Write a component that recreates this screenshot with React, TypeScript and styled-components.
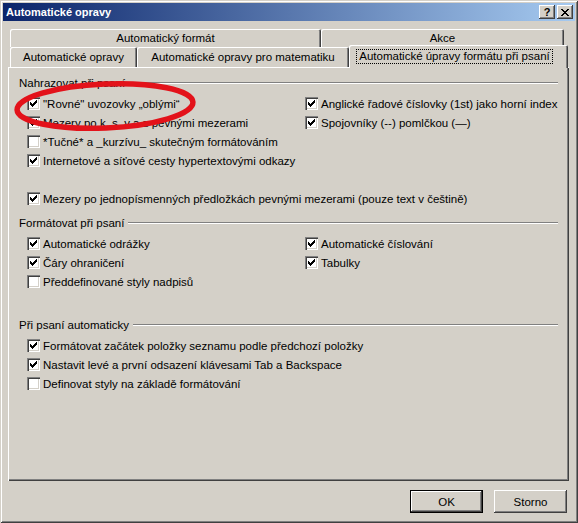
import React from "react";
import styled, { createGlobalStyle } from "styled-components";

const FACE = "#d4d0c8";
const SHADOW = "#808080";
const DARK = "#404040";

const GlobalStyle = createGlobalStyle`
  html, body {
    margin: 0;
    padding: 0;
    background: ${FACE};
  }
  body {
    font-family: "Liberation Sans", Arial, sans-serif;
    font-size: 11.5px;
    color: #000;
  }
`;

// Dialog frame
const Window = styled.div`
  position: relative;
  width: 578px;
  height: 523px;
  box-sizing: border-box;
  padding: 3px;
  background: ${FACE};
  display: flex;
  flex-direction: column;
  box-shadow: inset 1px 1px 0 ${FACE}, inset -1px -1px 0 ${DARK},
    inset 2px 2px 0 #fff, inset -2px -2px 0 ${SHADOW};
`;

const TitleBar = styled.div`
  height: 18px;
  display: flex;
  align-items: center;
  justify-content: space-between;
  padding: 0 2px 0 2px;
  background: linear-gradient(to right, #0a246a, #a6caf0);
`;

const TitleText = styled.span`
  color: #fff;
  font-weight: bold;
  font-size: 11px;
  padding-left: 1px;
`;

const CaptionButtons = styled.div`
  display: flex;
  gap: 2px;
`;

const CaptionButton = styled.div`
  width: 16px;
  height: 14px;
  box-sizing: border-box;
  background: ${FACE};
  display: flex;
  align-items: center;
  justify-content: center;
  font-weight: bold;
  font-size: 11px;
  box-shadow: inset -1px -1px 0 ${DARK}, inset 1px 1px 0 #fff,
    inset -2px -2px 0 ${SHADOW}, inset 2px 2px 0 ${FACE};
`;

// Tabs
const TabStrip = styled.div`
  margin: 8px 6px 0 5px;
  display: flex;
  flex-direction: column;
`;

const TabRow = styled.div<{ $height: number }>`
  display: flex;
  height: ${(p) => p.$height}px;
  padding-left: 2px;
  align-items: flex-end;
`;

const Tab = styled.div<{ $active?: boolean; $width: number }>`
  position: relative;
  flex: none;
  width: ${(p) => p.$width}px;
  box-sizing: border-box;
  height: ${(p) => (p.$active ? "calc(100% + 3px)" : "100%")};
  margin: ${(p) => (p.$active ? "0 0 -1px 0" : "0")};
  z-index: ${(p) => (p.$active ? 1 : 0)};
  background: ${FACE};
  border-top-left-radius: 2px;
  border-top-right-radius: 2px;
  display: flex;
  align-items: center;
  justify-content: center;
  padding: 0 ${(p) => (p.$active ? "8px 1px 0" : "0")};
  white-space: nowrap;
  box-shadow: inset 1px 1px 0 #fff, inset -1px 0 0 ${DARK},
    inset -2px 0 0 ${SHADOW};
`;

const FocusLabel = styled.span`
  outline: 1px dotted #000;
  outline-offset: 0;
  padding: 0 2px;
  line-height: 13px;
`;

const Panel = styled.div`
  margin: 0 6px 0 5px;
  height: 414px;
  box-sizing: border-box;
  padding: 8px 11px 0 11px;
  display: flex;
  flex-direction: column;
  box-shadow: inset 1px 1px 0 #fff, inset -1px -1px 0 ${DARK},
    inset -2px -2px 0 ${SHADOW};
`;

// Groups of options
const Group = styled.div<{ $gap: number }>`
  margin-top: ${(p) => p.$gap}px;
`;

const GroupTitle = styled.div`
  display: flex;
  align-items: center;
  gap: 4px;
  height: 16px;
  margin-bottom: 3px;
  white-space: nowrap;

  &::after {
    content: "";
    flex: 1;
    height: 0;
    border-top: 1px solid ${SHADOW};
    border-bottom: 1px solid #fff;
  }
`;

const OptionGrid = styled.div`
  display: grid;
  grid-template-columns: 278px 1fr;
  grid-auto-rows: 19px;
  padding-left: 8px;
`;

const Option = styled.label<{ $wide?: boolean }>`
  display: flex;
  align-items: center;
  gap: 3px;
  white-space: nowrap;
  grid-column: ${(p) => (p.$wide ? "1 / -1" : "auto")};
`;

const Spacer = styled.span<{ $wide?: boolean }>`
  grid-column: ${(p) => (p.$wide ? "1 / -1" : "auto")};
`;

const Box = styled.span`
  width: 13px;
  height: 13px;
  flex: none;
  box-sizing: border-box;
  background: #fff;
  position: relative;
  box-shadow: inset 1px 1px 0 ${SHADOW}, inset 2px 2px 0 ${DARK},
    inset -1px -1px 0 #fff, inset -2px -2px 0 ${FACE};

  svg {
    position: absolute;
    left: 3px;
    top: 3px;
  }
`;

// Bottom buttons
const Footer = styled.div`
  display: flex;
  justify-content: flex-end;
  gap: 11px;
  padding: 9px 8px 0 0;
`;

const Button = styled.div<{ $default?: boolean }>`
  width: 73px;
  height: 23px;
  box-sizing: border-box;
  display: flex;
  align-items: center;
  justify-content: center;
  background: ${FACE};
  box-shadow: ${(p) =>
    p.$default
      ? `inset 0 0 0 1px #000, inset -2px -2px 0 ${DARK}, inset 2px 2px 0 #fff, inset -3px -3px 0 ${SHADOW}`
      : `inset -1px -1px 0 ${DARK}, inset 1px 1px 0 #fff, inset -2px -2px 0 ${SHADOW}`};
`;

const Annotation = styled.svg`
  position: absolute;
  left: 12px;
  top: 78px;
  pointer-events: none;
`;

const CheckMark = () => (
  <svg width="7" height="7" viewBox="0 0 7 7" shapeRendering="crispEdges">
    <path
      fill="#000"
      d="M6 0h1v1h-1z M5 1h2v1h-2z M0 2h1v1h-1z M4 2h3v1h-3z M0 3h2v1h-2z M3 3h3v1h-3z M0 4h5v1h-5z M1 5h3v1h-3z M2 6h1v1h-1z"
    />
  </svg>
);

const CloseGlyph = () => (
  <svg width="8" height="7" viewBox="0 0 8 7" shapeRendering="crispEdges">
    <path
      fill="#000"
      d="M0 0h2v1h-2z M6 0h2v1h-2z M1 1h2v1h-2z M5 1h2v1h-2z M2 2h4v1h-4z M3 3h2v1h-2z M2 4h4v1h-4z M1 5h2v1h-2z M5 5h2v1h-2z M0 6h2v1h-2z M6 6h2v1h-2z"
    />
  </svg>
);

interface OptionItem {
  label: string;
  checked: boolean;
  wide?: boolean;
  blank?: boolean;
}

const CheckOption = ({ label, checked, wide }: OptionItem) => (
  <Option $wide={wide}>
    <Box>{checked && <CheckMark />}</Box>
    {label}
  </Option>
);

const replaceOptions: OptionItem[] = [
  { label: "\"Rovné\" uvozovky \u201eoblými\u201c", checked: true },
  { label: "Anglické řadové číslovky (1st) jako horní index", checked: true },
  { label: "Mezery po k, s, v a z pevnými mezerami", checked: true },
  { label: "Spojovníky (--) pomlčkou (—)", checked: true },
  { label: "*Tučné* a _kurzívu_ skutečným formátováním", checked: false },
  { label: "", checked: false, blank: true },
  { label: "Internetové a síťové cesty hypertextovými odkazy", checked: true, wide: true },
  { label: "", checked: false, blank: true, wide: true },
  {
    label: "Mezery po jednopísmenných předložkách pevnými mezerami (pouze text v češtině)",
    checked: true,
    wide: true,
  },
];

const formatOptions: OptionItem[] = [
  { label: "Automatické odrážky", checked: true },
  { label: "Automatické číslování", checked: true },
  { label: "Čáry ohraničení", checked: true },
  { label: "Tabulky", checked: true },
  { label: "Předdefinované styly nadpisů", checked: false },
];

const autoOptions: OptionItem[] = [
  { label: "Formátovat začátek položky seznamu podle předchozí položky", checked: true, wide: true },
  { label: "Nastavit levé a první odsazení klávesami Tab a Backspace", checked: true, wide: true },
  { label: "Definovat styly na základě formátování", checked: false, wide: true },
];

const renderOptions = (items: OptionItem[]) =>
  items.map((item, i) =>
    item.blank ? <Spacer key={i} $wide={item.wide} /> : <CheckOption key={i} {...item} />
  );

export default function App() {
  return (
    <>
      <GlobalStyle />
      <Window>
        <TitleBar>
          <TitleText>Automatické opravy</TitleText>
          <CaptionButtons>
            <CaptionButton>?</CaptionButton>
            <CaptionButton>
              <CloseGlyph />
            </CaptionButton>
          </CaptionButtons>
        </TitleBar>

        <TabStrip>
          <TabRow $height={18}>
            <Tab $width={311}>Automatický formát</Tab>
            <Tab $width={243}>Akce</Tab>
          </TabRow>
          <TabRow $height={20}>
            <Tab $width={127}>Automatické opravy</Tab>
            <Tab $width={212}>Automatické opravy pro matematiku</Tab>
            <Tab $width={219} $active>
              <FocusLabel>Automatické úpravy formátu při psaní</FocusLabel>
            </Tab>
          </TabRow>
        </TabStrip>

        <Panel>
          <Group $gap={0}>
            <GroupTitle>Nahrazovat při psaní</GroupTitle>
            <OptionGrid>{renderOptions(replaceOptions)}</OptionGrid>
          </Group>
          <Group $gap={7}>
            <GroupTitle>Formátovat při psaní</GroupTitle>
            <OptionGrid>{renderOptions(formatOptions)}</OptionGrid>
          </Group>
          <Group $gap={26}>
            <GroupTitle>Při psaní automaticky</GroupTitle>
            <OptionGrid>{renderOptions(autoOptions)}</OptionGrid>
          </Group>
        </Panel>

        <Footer>
          <Button $default>OK</Button>
          <Button>Storno</Button>
        </Footer>

        <Annotation width="190" height="60" viewBox="0 0 190 60">
          <ellipse
            cx="93"
            cy="28"
            rx="88"
            ry="22"
            fill="none"
            stroke="#e3121a"
            strokeWidth="5.5"
            transform="rotate(-2.5 93 28)"
          />
        </Annotation>
      </Window>
    </>
  );
}
